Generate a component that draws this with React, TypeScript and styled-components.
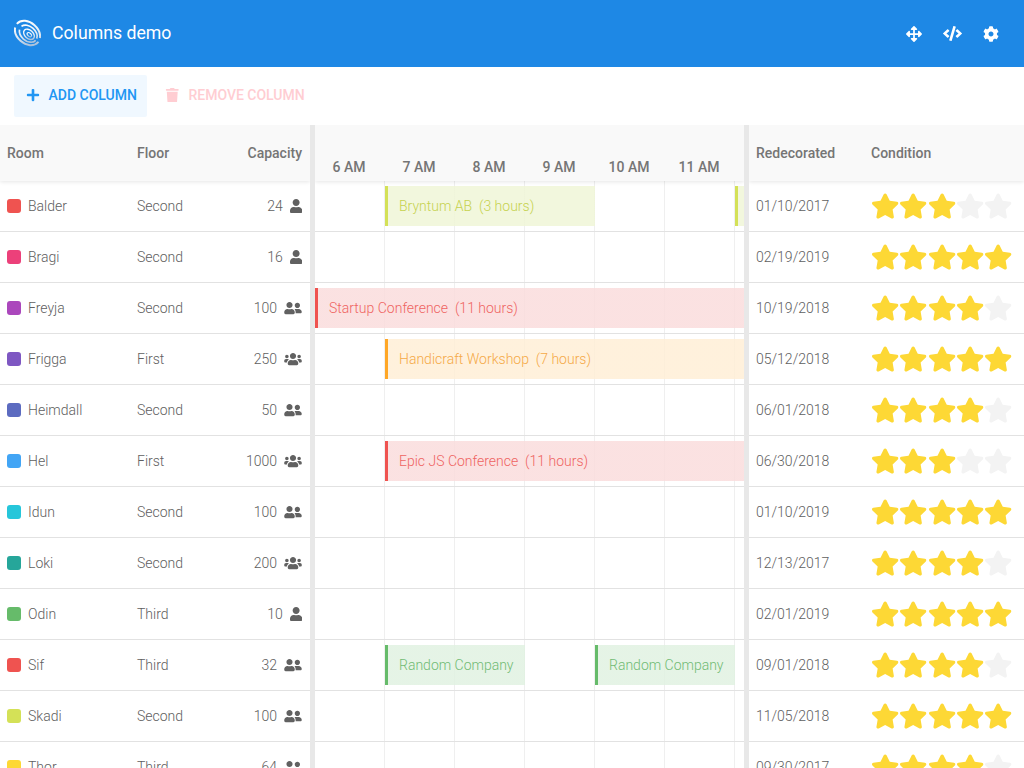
import styled, { createGlobalStyle } from "styled-components";
import {
  FaArrowsAlt,
  FaCode,
  FaCog,
  FaPlus,
  FaStar,
  FaTrash,
  FaUser,
  FaUserFriends,
  FaUsers,
} from "react-icons/fa";

type Tone = "lime" | "red" | "orange" | "green";

interface EventData {
  name: string;
  hours?: number;
  start: number;
  span: number;
  tone: Tone;
}

interface Room {
  name: string;
  color: string;
  floor: string;
  capacity: number;
  date: string;
  stars: number;
  events: EventData[];
}

const HOUR = 70;

const tones: Record<Tone, { bar: string; bg: string; text: string }> = {
  lime: { bar: "#d4e157", bg: "rgba(190, 215, 85, 0.2)", text: "#c6d24f" },
  red: { bar: "#ef5350", bg: "rgba(230, 80, 80, 0.17)", text: "#ef6461" },
  orange: { bar: "#ffa726", bg: "rgba(255, 167, 38, 0.16)", text: "#f5a947" },
  green: { bar: "#66bb6a", bg: "rgba(102, 187, 106, 0.17)", text: "#71bb74" },
};

const rooms: Room[] = [
  {
    name: "Balder",
    color: "#ef5350",
    floor: "Second",
    capacity: 24,
    date: "01/10/2017",
    stars: 3,
    events: [
      { name: "Bryntum AB", hours: 3, start: 1, span: 3, tone: "lime" },
      { name: "", start: 6, span: 3, tone: "lime" },
    ],
  },
  { name: "Bragi", color: "#ec407a", floor: "Second", capacity: 16, date: "02/19/2019", stars: 5, events: [] },
  {
    name: "Freyja",
    color: "#ab47bc",
    floor: "Second",
    capacity: 100,
    date: "10/19/2018",
    stars: 4,
    events: [{ name: "Startup Conference", hours: 11, start: 0, span: 11, tone: "red" }],
  },
  {
    name: "Frigga",
    color: "#7e57c2",
    floor: "First",
    capacity: 250,
    date: "05/12/2018",
    stars: 5,
    events: [{ name: "Handicraft Workshop", hours: 7, start: 1, span: 7, tone: "orange" }],
  },
  { name: "Heimdall", color: "#5c6bc0", floor: "Second", capacity: 50, date: "06/01/2018", stars: 4, events: [] },
  {
    name: "Hel",
    color: "#42a5f5",
    floor: "First",
    capacity: 1000,
    date: "06/30/2018",
    stars: 3,
    events: [{ name: "Epic JS Conference", hours: 11, start: 1, span: 11, tone: "red" }],
  },
  { name: "Idun", color: "#26c6da", floor: "Second", capacity: 100, date: "01/10/2019", stars: 5, events: [] },
  { name: "Loki", color: "#26a69a", floor: "Second", capacity: 200, date: "12/13/2017", stars: 4, events: [] },
  { name: "Odin", color: "#66bb6a", floor: "Third", capacity: 10, date: "02/01/2019", stars: 5, events: [] },
  {
    name: "Sif",
    color: "#ef5350",
    floor: "Third",
    capacity: 32,
    date: "09/01/2018",
    stars: 4,
    events: [
      { name: "Random Company", start: 1, span: 2, tone: "green" },
      { name: "Random Company", start: 4, span: 2, tone: "green" },
    ],
  },
  { name: "Skadi", color: "#d4e157", floor: "Second", capacity: 100, date: "11/05/2018", stars: 5, events: [] },
  { name: "Thor", color: "#fdd835", floor: "Third", capacity: 64, date: "09/30/2017", stars: 4, events: [] },
];

const hours = ["6 AM", "7 AM", "8 AM", "9 AM", "10 AM", "11 AM"];

const GlobalStyle = createGlobalStyle`
  html, body {
    margin: 0;
    height: 100%;
    overflow: hidden;
    background: #fff;
    font-family: Roboto, "Liberation Sans", sans-serif;
  }
`;

const Page = styled.div`
  display: flex;
  flex-direction: column;
  width: 1024px;
  height: 768px;
  overflow: hidden;
`;

const AppBar = styled.header`
  flex: none;
  display: flex;
  align-items: center;
  height: 67px;
  padding: 0 25px 0 14px;
  box-sizing: border-box;
  background: #1e88e5;
  color: #fff;
`;

const Logo = styled.svg`
  width: 27px;
  height: 28px;
  margin: -2px 11px 0 0;
`;

const Title = styled.h1`
  flex: 1;
  margin: 0;
  padding-bottom: 2px;
  font-size: 17.7px;
  font-weight: 400;
`;

const AppIcons = styled.div`
  display: flex;
  align-items: center;
  gap: 21px;
  font-size: 16px;

  svg {
    display: block;
  }
`;

const Toolbar = styled.div`
  flex: none;
  display: flex;
  align-items: center;
  gap: 6px;
  height: 58px;
  padding: 0 14px;
  box-sizing: border-box;
`;

const ToolButton = styled.button<{ $danger?: boolean }>`
  display: flex;
  align-items: center;
  gap: 8.5px;
  height: 42px;
  padding: 0 10.5px 2px 12px;
  border: 0;
  border-radius: 2px;
  background: ${(p) => (p.$danger ? "transparent" : "#f0f8ff")};
  color: ${(p) => (p.$danger ? "#ffcdd2" : "#2196f3")};
  font-family: inherit;
  font-size: 14px;
  font-weight: 500;
`;

const Grid = styled.div`
  flex: 1;
  display: flex;
  min-height: 0;
`;

const Section = styled.section<{ $width?: number }>`
  flex: ${(p) => (p.$width ? `0 0 ${p.$width}px` : "1")};
  min-width: 0;
  overflow: hidden;
`;

const Splitter = styled.div`
  flex: 0 0 5px;
  background: #e8e8e8;
  z-index: 2;
`;

const HeaderRow = styled.div`
  display: flex;
  height: 56px;
  background: #f9f9f9;
  box-shadow: 0 1px 4px rgba(0, 0, 0, 0.1);
  position: relative;
  z-index: 1;
`;

const HeaderCell = styled.div<{ $width: number; $right?: boolean }>`
  flex: 0 0 ${(p) => p.$width}px;
  display: flex;
  align-items: center;
  justify-content: ${(p) => (p.$right ? "flex-end" : "flex-start")};
  padding: 0 8px 0 7px;
  box-sizing: border-box;
  font-size: 14px;
  font-weight: 500;
  color: #757575;
`;

const HourCell = styled.div`
  flex: 0 0 ${HOUR}px;
  padding: 34px 2px 0 0;
  box-sizing: border-box;
  text-align: center;
  font-size: 14px;
  font-weight: 500;
  color: #757575;
`;

const Row = styled.div`
  display: flex;
  align-items: center;
  height: 51px;
  box-sizing: border-box;
  border-bottom: 1px solid #e2e2e2;
  font-size: 14px;
  font-weight: 300;
  color: #606060;
  position: relative;
`;

const Cell = styled.div<{ $width: number; $right?: boolean }>`
  flex: 0 0 ${(p) => p.$width}px;
  display: flex;
  align-items: center;
  justify-content: ${(p) => (p.$right ? "flex-end" : "flex-start")};
  padding: 0 8px 0 7px;
  box-sizing: border-box;
`;

const Swatch = styled.span<{ $color: string }>`
  flex: none;
  width: 14px;
  height: 14px;
  margin-right: 7px;
  border-radius: 3px;
  background: ${(p) => p.$color};
`;

const CapacityIcon = styled.span<{ $wide: boolean }>`
  display: flex;
  margin-left: 7px;
  color: #616161;

  svg {
    width: ${(p) => (p.$wide ? "18px" : "12.25px")};
    height: 14px;
  }
`;

const Tick = styled.div`
  flex: 0 0 ${HOUR}px;
  align-self: stretch;
  box-sizing: border-box;
  border-right: 1px solid #efefef;
`;

// the white veil leaves only a trace of the hour lines under an event
const EventBar = styled.div<{ $tone: Tone; $start: number; $span: number }>`
  position: absolute;
  top: 5px;
  left: ${(p) => p.$start * HOUR}px;
  width: ${(p) => p.$span * HOUR}px;
  height: 40px;
  display: flex;
  align-items: center;
  padding-left: 11px;
  box-sizing: border-box;
  white-space: pre;
  border-left: 3px solid ${(p) => tones[p.$tone].bar};
  background: linear-gradient(${(p) => tones[p.$tone].bg}, ${(p) => tones[p.$tone].bg}), rgba(255, 255, 255, 0.8);
  background-clip: padding-box;
  color: ${(p) => tones[p.$tone].text};
`;

const Stars = styled.div`
  display: flex;
`;

const Star = styled(FaStar)<{ $on: boolean }>`
  display: block;
  width: 28.3px;
  height: 26px;
  color: ${(p) => (p.$on ? "#fdd835" : "#f3f3f3")};
`;

const capacityIcon = (capacity: number) => {
  if (capacity < 30) return <FaUser />;
  if (capacity <= 100) return <FaUserFriends />;
  return <FaUsers />;
};

const App = () => (
  <Page>
    <GlobalStyle />
    <AppBar>
      <Logo viewBox="0 0 27 28" fill="none">
        <defs>
          <linearGradient id="swirl" x1="0" y1="0.2" x2="1" y2="0.8">
            <stop offset="0" stopColor="#ffffff" />
            <stop offset="0.6" stopColor="#dfe9f3" />
            <stop offset="1" stopColor="#9fb9d6" />
          </linearGradient>
        </defs>
        <g transform="rotate(42 13.5 14)" stroke="url(#swirl)">
          <ellipse cx="13.5" cy="14" rx="14" ry="10.5" strokeWidth="2" strokeDasharray="34 4" />
          <ellipse cx="14.5" cy="14" rx="10" ry="7.2" strokeWidth="1.7" strokeDasharray="24 4" />
          <ellipse cx="15.5" cy="14" rx="6.2" ry="4.2" strokeWidth="1.4" />
          <ellipse cx="16" cy="14" rx="2.6" ry="1.6" strokeWidth="1.1" />
        </g>
      </Logo>
      <Title>Columns demo</Title>
      <AppIcons>
        <FaArrowsAlt />
        <FaCode size={19} />
        <FaCog />
      </AppIcons>
    </AppBar>
    <Toolbar>
      <ToolButton>
        <FaPlus size={14} />
        ADD COLUMN
      </ToolButton>
      <ToolButton $danger>
        <FaTrash size={14.5} />
        REMOVE COLUMN
      </ToolButton>
    </Toolbar>
    <Grid>
      <Section $width={310}>
        <HeaderRow>
          <HeaderCell $width={130}>Room</HeaderCell>
          <HeaderCell $width={90}>Floor</HeaderCell>
          <HeaderCell $width={90} $right>
            Capacity
          </HeaderCell>
        </HeaderRow>
        {rooms.map((room) => (
          <Row key={room.name}>
            <Cell $width={130}>
              <Swatch $color={room.color} />
              {room.name}
            </Cell>
            <Cell $width={90}>{room.floor}</Cell>
            <Cell $width={90} $right>
              {room.capacity}
              <CapacityIcon $wide={room.capacity >= 30}>{capacityIcon(room.capacity)}</CapacityIcon>
            </Cell>
          </Row>
        ))}
      </Section>
      <Splitter />
      <Section $width={429}>
        <HeaderRow>
          {hours.map((hour) => (
            <HourCell key={hour}>{hour}</HourCell>
          ))}
        </HeaderRow>
        {rooms.map((room) => (
          <Row key={room.name}>
            {hours.map((hour) => (
              <Tick key={hour} />
            ))}
            {room.events.map((event) => (
              <EventBar key={event.start} $tone={event.tone} $start={event.start} $span={event.span}>
                {event.name}
                {event.hours ? `  (${event.hours} hours)` : ""}
              </EventBar>
            ))}
          </Row>
        ))}
      </Section>
      <Splitter />
      <Section>
        <HeaderRow>
          <HeaderCell $width={115}>Redecorated</HeaderCell>
          <HeaderCell $width={160}>Condition</HeaderCell>
        </HeaderRow>
        {rooms.map((room) => (
          <Row key={room.name}>
            <Cell $width={115}>{room.date}</Cell>
            <Cell $width={160}>
              <Stars>
                {[0, 1, 2, 3, 4].map((i) => (
                  <Star key={i} $on={i < room.stars} />
                ))}
              </Stars>
            </Cell>
          </Row>
        ))}
      </Section>
    </Grid>
  </Page>
);

export default App;
